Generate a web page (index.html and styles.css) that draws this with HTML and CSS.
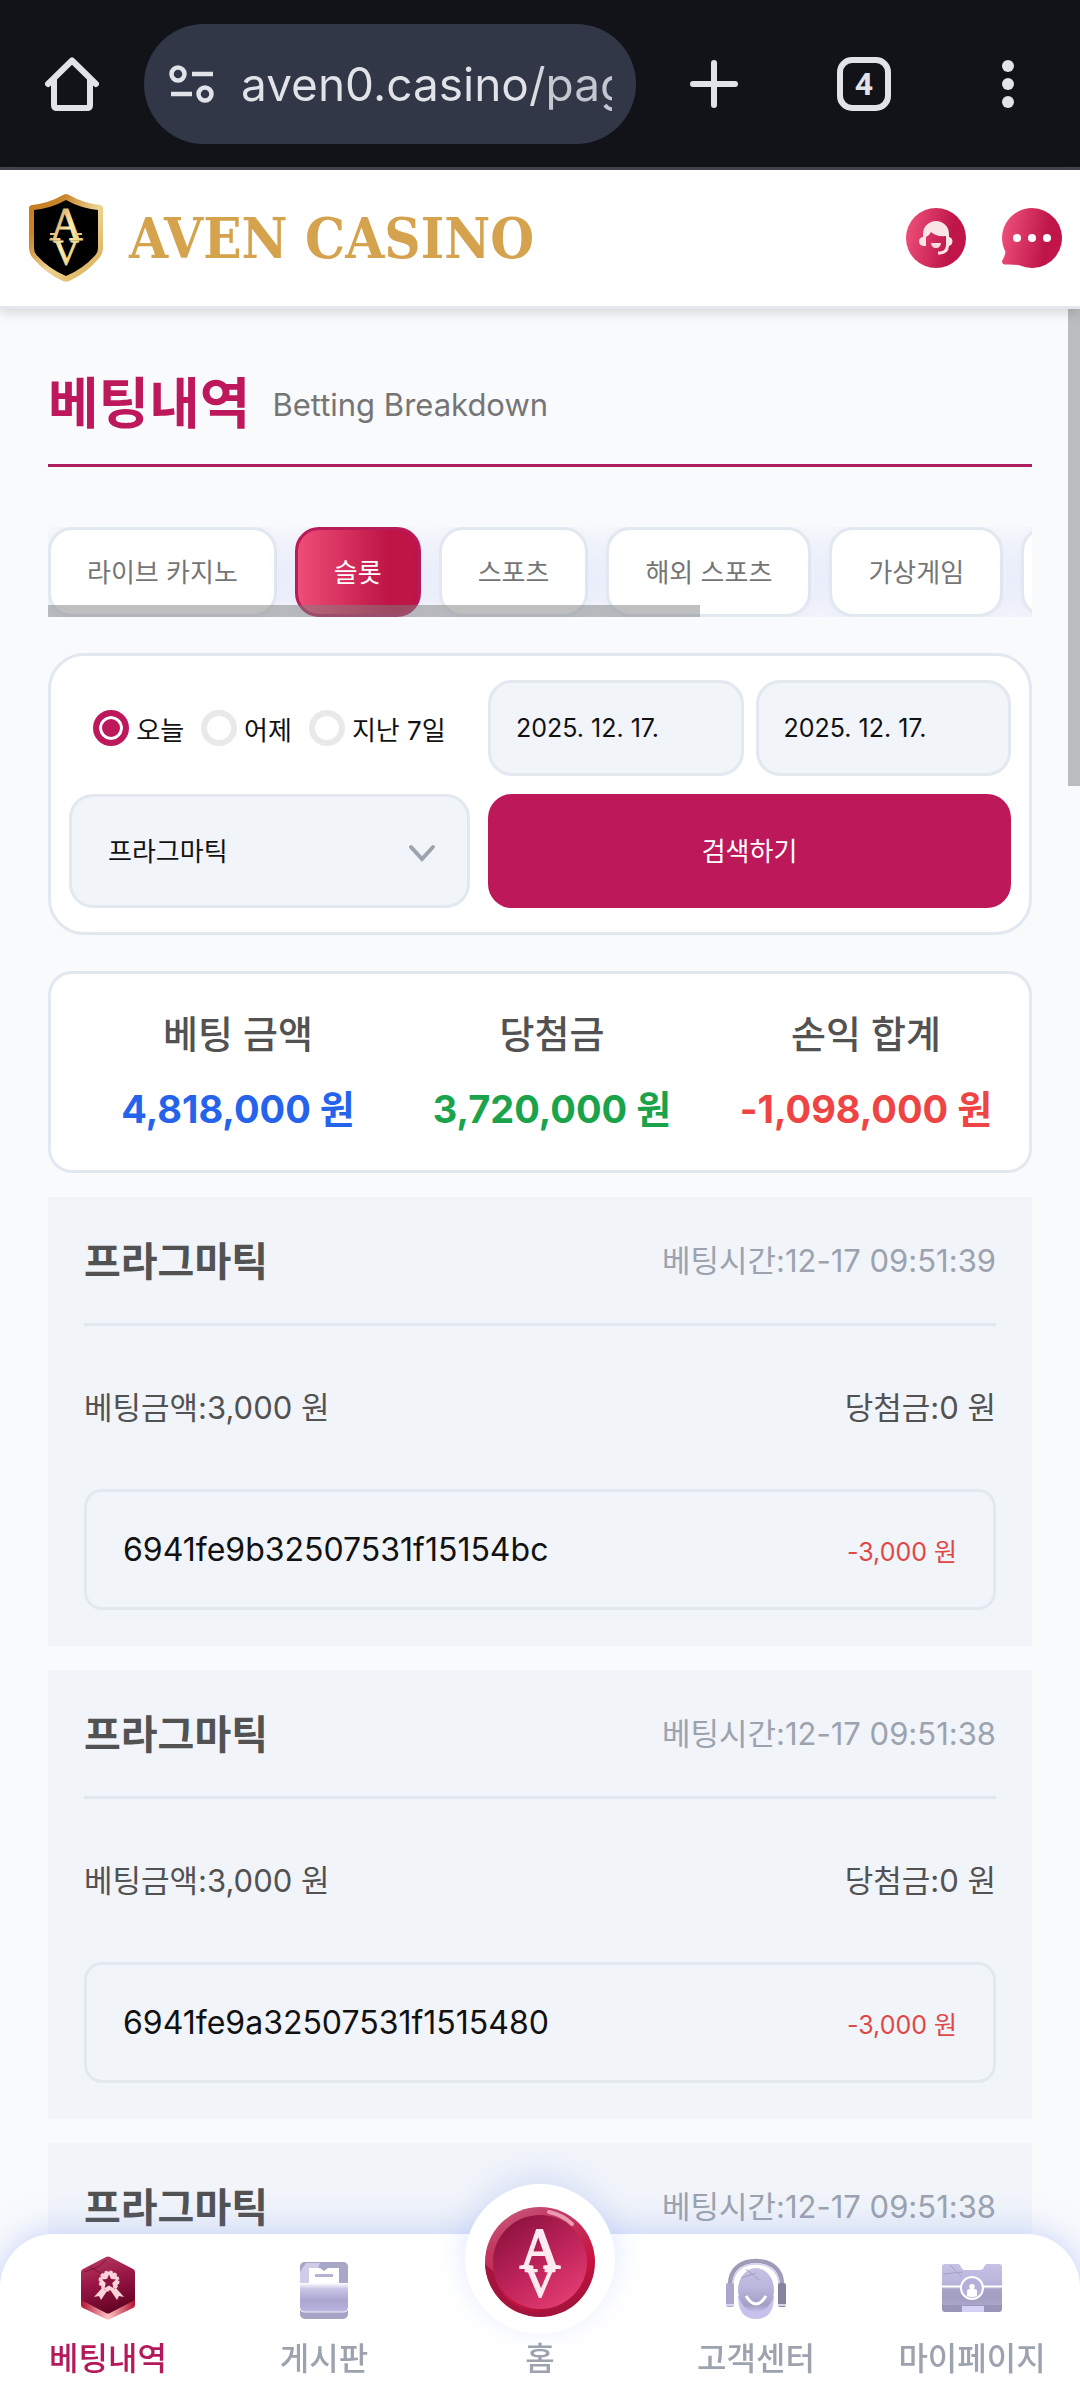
FILE: index.html
```html
<!DOCTYPE html>
<html lang="ko">
<head>
<meta charset="utf-8">
<meta name="viewport" content="width=device-width, initial-scale=1">
<title>AVEN CASINO - 베팅내역</title>
<link rel="stylesheet" href="styles.css">
</head>
<body>
<div class="app">
  <div class="browser-bar">
    <button class="bar-button" type="button" aria-label="홈페이지">
      <svg width="54" height="54" viewBox="0 0 54 54" fill="none" stroke="#e2e3e9" stroke-width="6" stroke-linejoin="round" stroke-linecap="round"><path d="M3 27 27 3.500 51 27M9 22v26q0 3 3 3h30q3 0 3-3V22"/></svg>
    </button>
    <div class="address">
      <svg width="46" height="38" viewBox="0 0 46 38" fill="none" stroke="#e2e3e9" stroke-width="4.500"><circle cx="9" cy="9" r="6.500"/><path d="M23 9h21M2 29h21"/><circle cx="36" cy="29" r="6.500"/></svg>
      <input class="address-input" type="text" aria-label="주소" value="aven0.casino/pag">
    </div>
    <div class="bar-actions">
      <button class="bar-button" type="button" aria-label="새 탭">
        <svg width="48" height="48" viewBox="0 0 48 48" stroke="#e2e3e9" stroke-width="6" stroke-linecap="round"><path d="M24 3v42M3 24h42"/></svg>
      </button>
      <button class="bar-button tab-count" type="button">4</button>
      <button class="bar-button" type="button" aria-label="메뉴">
        <svg width="36" height="48" viewBox="0 0 36 48" fill="#e2e3e9"><circle cx="18" cy="6" r="6"/><circle cx="18" cy="24" r="6"/><circle cx="18" cy="42" r="6"/></svg>
      </button>
    </div>
  </div>

  <header class="site-header">
    <a class="brand" href="#">
      <svg width="74" height="90" viewBox="0 0 74 90">
        <defs>
          <linearGradient id="gold" x1="0" y1="0" x2="1" y2="1"><stop offset="0" stop-color="#c47a1c"/><stop offset=".25" stop-color="#c9842a"/><stop offset=".55" stop-color="#edd490"/><stop offset="1" stop-color="#d8a64e"/></linearGradient>
          <linearGradient id="goldText" x1="0" y1="0" x2="1" y2="1"><stop offset="0" stop-color="#b9742a"/><stop offset=".5" stop-color="#fbeeb0"/><stop offset="1" stop-color="#e0b45c"/></linearGradient>
        </defs>
        <path fill="url(#gold)" d="M37 1q2 0 4 1.500Q54 10 71 12q3 .500 3 3v40q0 5-3 9Q58 80 40 88q-3 1.500-6 0Q16 80 3 64q-3-4-3-9V15q0-2.500 3-3Q20 10 33 2.500 35 1 37 1Z"/>
        <path fill="#000" d="M37 7Q51 15 69 17v38q0 4-2.500 7Q54 76 37 83 20 76 7.500 62 5 59 5 55V17Q23 15 37 7Z"/>
        <text class="mono" fill="url(#goldText)" stroke="url(#goldText)"><tspan x="37" y="47" font-size="46">A</tspan><tspan x="37" y="72" font-size="36">V</tspan></text>
        <path stroke="#e7c87c" stroke-width="2" d="M21 41h7M46 41h7"/>
      </svg>
      <span class="brand-name">AVEN CASINO</span>
    </a>
    <div class="header-links">
      <a href="#" aria-label="상담원">
        <svg width="60" height="60" viewBox="0 0 60 60">
          <defs><linearGradient id="pink" x1="0" x2="1" y1=".4" y2=".6"><stop offset="0" stop-color="#ed4e78"/><stop offset=".75" stop-color="#be1549"/><stop offset="1" stop-color="#c3154a"/></linearGradient></defs>
          <circle cx="30" cy="30" r="30" fill="url(#pink)"/>
          <path fill="#f9e4e6" d="M17 29v-3a13 13 0 0 1 26 0v3q3 .500 3.500 4 0 4-3.500 5-.500 8-9 8.500h-2v-3h2q5.500-.500 6-6.500V28q-10 1-15-4-2 4-5 5v9h-2q-5-.500-5-4.500t4-4.500Z"/>
          <path fill="#f9dce0" d="M25 35h10q-.500 5-5 5t-5-5Z"/>
        </svg>
      </a>
      <a href="#" aria-label="채팅">
        <svg width="60" height="60" viewBox="0 0 60 60"><path fill="url(#pink)" d="M30 0a30 30 0 1 1-12 57.500Q12 56 2.500 56.500 0 56 0 53 3 48 3.500 44A30 30 0 0 1 30 0Z"/><g fill="#fff"><circle cx="15" cy="30" r="4"/><circle cx="30" cy="30" r="4"/><circle cx="45" cy="30" r="4"/></g></svg>
      </a>
    </div>
  </header>

  <main class="content">
    <div class="page-thumb"></div>
    <div class="page-title">
      <h1>베팅내역</h1>
      <span>Betting Breakdown</span>
    </div>

    <div class="tabs-wrap">
      <nav class="tabs">
        <button class="tab" type="button">라이브 카지노</button>
        <button class="tab tab-active" type="button">슬롯</button>
        <button class="tab" type="button">스포츠</button>
        <button class="tab" type="button">해외 스포츠</button>
        <button class="tab" type="button">가상게임</button>
        <button class="tab tab-last" type="button" aria-label="미니게임"></button>
      </nav>
      <div class="tabs-thumb"></div>
    </div>

    <form class="filter card">
      <div class="periods">
        <label><input type="radio" name="period" checked>오늘</label>
        <label><input type="radio" name="period">어제</label>
        <label><input type="radio" name="period">지난 7일</label>
      </div>
      <div class="dates">
        <input class="field" type="text" aria-label="시작일" value="2025. 12. 17.">
        <input class="field" type="text" aria-label="종료일" value="2025. 12. 17.">
      </div>
      <div class="select-wrap">
        <select class="field" aria-label="게임사"><option>프라그마틱</option></select>
        <svg class="chevron" width="28" height="18" viewBox="0 0 28 18" fill="none" stroke="#9ea3af" stroke-width="4" stroke-linecap="round"><path d="M3 3l11 12L25 3"/></svg>
      </div>
      <button class="search" type="button">검색하기</button>
    </form>

    <dl class="summary card">
      <div><dt>베팅 금액</dt><dd class="blue">4,818,000 원</dd></div>
      <div><dt>당첨금</dt><dd class="green">3,720,000 원</dd></div>
      <div><dt>손익 합계</dt><dd class="red">-1,098,000 원</dd></div>
    </dl>

    <div class="bets">
      <article class="bet">
        <header class="bet-head"><h2>프라그마틱</h2><time>베팅시간:12-17 09:51:39</time></header>
        <div class="bet-row"><span>베팅금액:3,000 원</span><span>당첨금:0 원</span></div>
        <div class="bet-detail"><span>6941fe9b32507531f15154bc</span><span class="loss">-3,000 원</span></div>
      </article>
      <article class="bet">
        <header class="bet-head"><h2>프라그마틱</h2><time>베팅시간:12-17 09:51:38</time></header>
        <div class="bet-row"><span>베팅금액:3,000 원</span><span>당첨금:0 원</span></div>
        <div class="bet-detail"><span>6941fe9a32507531f1515480</span><span class="loss">-3,000 원</span></div>
      </article>
      <article class="bet">
        <header class="bet-head"><h2>프라그마틱</h2><time>베팅시간:12-17 09:51:38</time></header>
      </article>
    </div>
  </main>

  <nav class="bottom-nav">
    <a class="nav-item nav-active" href="#">
      <svg width="64" height="64" viewBox="0 0 64 64">
        <defs>
          <linearGradient id="hex" x1=".3" y1="0" x2=".6" y2="1"><stop offset="0" stop-color="#b43a62"/><stop offset=".4" stop-color="#9c1746"/><stop offset="1" stop-color="#5f0222"/></linearGradient>
          <linearGradient id="hexEdge"><stop offset="0" stop-color="#b3122f"/><stop offset=".5" stop-color="#ffc4c8"/><stop offset="1" stop-color="#b3122f"/></linearGradient>
        </defs>
        <path fill="url(#hexEdge)" d="M5 42l27 14 27-14v7q0 2-2 3L34 63q-2 1-4 0L7 52q-2-1-2-3Z"/>
        <path fill="url(#hex)" d="M30 1q2-1 4 0l23 12q2 1 2 3v26q0 2-2 3L34 57q-2 1-4 0L7 45q-2-1-2-3V16q0-2 2-3Z"/>
        <path stroke="#7a1236" fill="none" d="M8 16l14-5 8-7M14 11l14 8"/>
        <g fill="#fbd3da"><path d="M26 32l5 3-6 9-2-4-5 1ZM40 32l-5 3 6 9 2-4 5 1Z"/><circle cx="33" cy="25" r="9.500" stroke="#fbd3da" stroke-width="2" stroke-dasharray="3 2"/></g>
        <path fill="#8c1340" d="M33 18.500l2 4.500 5 .500-3.700 3.500 1 5-4.300-2.500-4.300 2.500 1-5-3.700-3.500 5-.500Z"/>
      </svg>
      <span>베팅내역</span>
    </a>
    <a class="nav-item" href="#">
      <svg width="64" height="64" viewBox="0 0 64 64">
        <defs><linearGradient id="lav" x1="0" y1="0" x2="0" y2="1"><stop offset="0" stop-color="#c6c2e4"/><stop offset=".45" stop-color="#b9b5dc"/><stop offset=".85" stop-color="#a29fc4"/><stop offset="1" stop-color="#c5c0ec"/></linearGradient>
        <linearGradient id="pocket" x1="0" y1="0" x2="0" y2="1"><stop offset="0" stop-color="#fff"/><stop offset=".2" stop-color="#c9c5e6"/><stop offset=".6" stop-color="#aaa6d0"/><stop offset="1" stop-color="#bbb6e2"/></linearGradient></defs>
        <rect x="8" y="6" width="48" height="57" rx="5" fill="#a5a3c6"/>
        <rect x="8" y="6" width="48" height="30" rx="5" fill="#a9a7c8"/>
        <path fill="#cfccea" d="M8 16l6-9h14l-10 26H8Z"/>
        <path fill="#fff" d="M17 12h11l4 3 4-3h11v20H17Z"/>
        <path stroke="#b5b2d4" stroke-width="3" d="M23 19.500h18"/>
        <path fill="url(#pocket)" d="M8 27h48v25q0 4-4 4H12q-4 0-4-4Z"/>
        <path fill="none" stroke="#eeecfa" d="M8 52q0 4 4 4h40q4 0 4-4"/>
      </svg>
      <span>게시판</span>
    </a>
    <a class="nav-item" href="#">
      <span class="home-disc">
        <svg width="112" height="112" viewBox="0 0 112 112">
          <defs>
            <linearGradient id="rim" x1=".2" y1="0" x2=".7" y2="1"><stop offset="0" stop-color="#c9597b"/><stop offset=".25" stop-color="#c23862"/><stop offset=".7" stop-color="#c9123f"/><stop offset="1" stop-color="#9c1339"/></linearGradient>
            <linearGradient id="coin" x1=".1" y1="0" x2=".8" y2="1"><stop offset="0" stop-color="#86103a"/><stop offset=".55" stop-color="#bf245a"/><stop offset="1" stop-color="#e63f74"/></linearGradient>
          </defs>
          <circle cx="56" cy="56" r="55" fill="url(#rim)"/>
          <path fill="#a3153e" d="M1 58a55 55 0 0 0 92 38l-4-1A48 48 0 0 1 10 66Z"/>
          <circle cx="56" cy="56" r="47" fill="url(#coin)"/>
          <path d="M65 6q14 3 23 12" fill="none" stroke="#ea9bb1" stroke-width="4" stroke-linecap="round"/>
          <text class="mono" fill="#fdeaf1" stroke="#fdeaf1" stroke-width="2"><tspan x="56" y="62" font-size="56">A</tspan><tspan x="56" y="90" font-size="41">V</tspan></text>
        </svg>
      </span>
      <span>홈</span>
    </a>
    <a class="nav-item" href="#">
      <svg width="64" height="64" viewBox="0 0 64 64">
        <path d="M6 29C6 12 18 5 32 5s26 7 26 24" fill="none" stroke="#9f9bb9" stroke-width="4.500"/>
        <path d="M9 29C9 14 20 8 32 8s23 6 23 21" fill="none" stroke="#d5d2ec" stroke-width="1.500"/>
        <path fill="#c7c2ec" d="M14 40h36q0 23-18 23T14 40Z"/>
        <ellipse cx="32" cy="34" rx="18" ry="22" fill="url(#lav)"/>
        <path fill="none" stroke="#a3a0c0" d="M17 22l15-5M22 13l13 11"/>
        <path d="M22 40q10 16 20 0" fill="none" stroke="#fff" stroke-width="3"/>
        <rect x="2" y="27" width="8" height="24" rx="2" fill="#aaa6cc"/><rect x="54" y="27" width="8" height="24" rx="2" fill="#87839f"/>
        <path stroke="#d8d5f0" stroke-width="2" d="M2 49h8M54 49h8"/>
      </svg>
      <span>고객센터</span>
    </a>
    <a class="nav-item" href="#">
      <svg width="64" height="64" viewBox="0 0 64 64">
        <path fill="#9895b8" d="M2 46h60v7q0 3-3 3H5q-3 0-3-3Z"/><path fill="#d3cff5" d="M22 50h22v6H22Z"/>
        <path fill="url(#lav)" d="M2 11q0-3 3-3h13q2 0 3 3t4 3h15q3 0 4-3t3-3h12q3 0 3 3v35q0 3-3 3H5q-3 0-3-3Z"/>
        <path d="M2 33h60v13q0 3-3 3H5q-3 0-3-3Z" fill="#a29fc2" opacity=".8"/>
        <path stroke="#fff" stroke-width="2" d="M2 30.500h60"/>
        <path fill="none" stroke="#a3a0c4" d="M3 18l20-2M10 9l12 12"/>
        <circle cx="32" cy="32" r="11" fill="#b4b0da" stroke="#fff" stroke-width="2"/>
        <path fill="#fff" d="M27 40v-5q0-2 3-2-2-5 2-5t2 5q3 0 3 2v5q-5 2-10 0Z"/>
      </svg>
      <span>마이페이지</span>
    </a>
  </nav>
</div>
</body>
</html>
```
FILE: styles.css
```css
* { box-sizing: border-box; margin: 0; padding: 0; }
html, body { height: 100%; }
body {
  font-family: Inter, "Noto Sans CJK KR", sans-serif;
  font-size: 26px;
  color: #111;
  background: #f9fafc;
}
button, input, select { font: inherit; color: inherit; border: 0; background: none; appearance: none; }
a { color: inherit; text-decoration: none; }
svg { display: block; flex: none; }
.mono { font-family: "Liberation Serif", serif; font-weight: 400; text-anchor: middle; }

.app { display: flex; flex-direction: column; height: 100vh; overflow: hidden; position: relative; }

/* Browser toolbar */
.browser-bar {
  display: flex;
  align-items: center;
  flex: none;
  height: 170px;
  padding: 0 54px 0 45px;
  background: #111318;
  border-bottom: 3px solid #44454f;
}
.bar-button { flex: none; }
.address {
  display: flex;
  align-items: center;
  gap: 26px;
  flex: 1;
  min-width: 0;
  height: 120px;
  margin: 0 54px 0 45px;
  padding: 0 24px 0 25px;
  border-radius: 60px;
  background: #313747;
}
.address-input {
  flex: 1;
  min-width: 0;
  height: 72px;
  font-size: 46px;
  outline: 0;
  color: transparent;
  background: linear-gradient(90deg, #e2e3e9 78%, #c4c6d0 84%);
  background-clip: text;
}
.bar-actions { display: flex; flex: none; align-items: center; gap: 99px; }
.tab-count {
  width: 54px;
  height: 54px;
  border: 6px solid #e2e3e9;
  border-radius: 15px;
  color: #e2e3e9;
  font: 700 32px/42px Roboto, sans-serif;
}

/* Site header */
.site-header {
  position: relative;
  z-index: 2;
  display: flex;
  align-items: center;
  justify-content: space-between;
  flex: none;
  height: 139px;
  padding: 0 18px 0 29px;
  background: #fff;
  border-bottom: 3px solid #e1e7ed;
  box-shadow: 0 3px 12px rgba(0, 0, 0, .16);
}
.brand { display: flex; align-items: center; gap: 26px; }
.brand-name { font: 700 56px/60px "DejaVu Serif Condensed", "Liberation Serif", serif; color: #d5a24e; }
.header-links { display: flex; gap: 36px; }

/* Content */
.content { position: relative; flex: 1; min-height: 0; padding: 36px 48px 0; background: #f9fafc; }
.page-thumb { position: absolute; top: 0; right: 0; width: 12px; height: 477px; background: #bbbcbe; }
.page-title {
  display: flex;
  align-items: center;
  gap: 22px;
  height: 122px;
  margin-bottom: 60px;
  border-bottom: 3px solid #ae1e5c;
}
.page-title h1 { font-size: 55px; line-height: 60px; padding-bottom: 4px; font-weight: 700; color: #be185d; }
.page-title span { font-size: 31px; color: #757575; }

.tabs-wrap { position: relative; margin-bottom: 36px; }
.tabs { display: flex; gap: 18px; overflow: hidden; }
.tab {
  flex: none;
  height: 90px;
  padding: 0 36px 3px;
  border: 3px solid #e2e8f0;
  border-radius: 24px;
  background: #fff;
  color: #757575;
  box-shadow: 0 6px 30px rgba(98, 124, 236, .16);
}
.tab-active { color: #fff; border-color: #b81b5a; background: linear-gradient(90deg, #ee4d78, #be1546 75%); }
.tab-last { width: 174px; }
.tabs-thumb { position: absolute; left: 0; bottom: 0; width: 652px; max-width: 100%; height: 12px; background: rgba(128, 128, 128, .5); }

.card { background: #fff; border: 3px solid #e2e8f0; border-radius: 24px; }
.filter {
  display: grid;
  grid-template-columns: 401fr 523fr;
  gap: 18px;
  padding: 24px 18px;
  margin-bottom: 36px;
  border-radius: 36px;
}
.periods { display: flex; align-items: center; justify-content: center; gap: 17px; }
.periods label { display: flex; align-items: center; gap: 7px; white-space: nowrap; }
.periods input { width: 36px; height: 36px; border: 6px solid #e9e9e9; border-radius: 50%; }
.periods input:checked { border-color: #be185d; background: #be185d; box-shadow: inset 0 0 0 3px #fff; }
.dates { display: grid; grid-template-columns: 1fr 1fr; gap: 12px; }
.field {
  width: 100%;
  min-width: 0;
  height: 96px;
  padding: 0 25px;
  border: 3px solid #e2e8f0;
  border-radius: 24px;
  background: #f1f4f9;
}
.dates .field { font-size: 25px; }
.select-wrap { position: relative; }
.select-wrap .field { height: 114px; padding: 0 36px; }
.chevron { position: absolute; right: 34px; top: 50px; pointer-events: none; }
.search { height: 114px; padding-bottom: 3px; border-radius: 24px; background: #bc185a; color: #fff; }

.summary {
  display: grid;
  grid-template-columns: repeat(3, 1fr);
  padding: 30px 6px 31px 30px;
  margin-bottom: 24px;
  text-align: center;
  line-height: 60px;
}
.summary div { display: flex; flex-direction: column; gap: 15px; }
.summary dt { font-size: 38px; font-weight: 500; color: #525252; }
.summary dd { font-size: 38px; font-weight: 700; white-space: nowrap; }
.blue { color: #2563eb; }
.green { color: #1aa34a; }
.red { color: #ef4444; }

.bets { display: grid; gap: 24px; }
.bet { padding: 0 36px 36px; background: #f1f4f9; color: #525252; font-size: 31px; }
.bet-head {
  display: flex;
  align-items: center;
  justify-content: space-between;
  height: 129px;
  padding-bottom: 3px;
  border-bottom: 3px solid #e2e8f0;
}
.bet-head h2 { font-size: 40px; font-weight: 700; }
.bet-head time { color: #9ca3af; }
.bet-row { display: flex; align-items: center; justify-content: space-between; height: 163px; padding-bottom: 4px; }
.bet-detail {
  display: flex;
  align-items: center;
  justify-content: space-between;
  height: 121px;
  padding: 0 36px;
  border: 3px solid #e2e8f0;
  border-radius: 18px;
  font-size: 32px;
  color: #111;
}
.loss { font-size: 25px; color: #e04848; }

/* Bottom navigation */
.bottom-nav {
  position: fixed;
  left: 0;
  right: 0;
  bottom: 0;
  z-index: 3;
  display: grid;
  grid-template-columns: repeat(5, 1fr);
  height: 168px;
  padding: 22px 0 20px;
  border-radius: 54px 54px 0 0;
  background: #fff;
  box-shadow: 0 0 36px rgba(98, 134, 246, .35);
}
.nav-item {
  display: flex;
  flex-direction: column;
  align-items: center;
  justify-content: space-between;
  font-size: 32px;
  line-height: 46px;
  font-weight: 500;
  color: #9ca3af;
}
.nav-active { color: #b5195b; }
.home-disc {
  display: grid;
  place-items: center;
  width: 150px;
  height: 150px;
  margin: -72px 0 0;
  padding-top: 6px;
  border-radius: 50%;
  background: #fff;
  box-shadow: 0 -8px 30px rgba(98, 134, 246, .2);
}
```
